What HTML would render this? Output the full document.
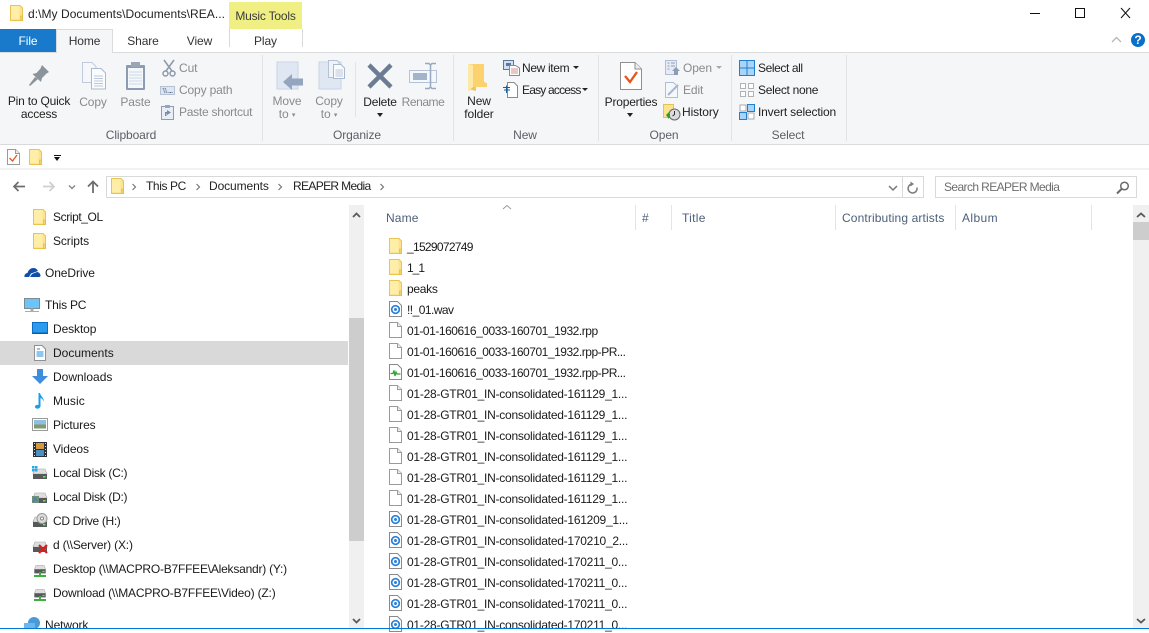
<!DOCTYPE html>
<html><head><meta charset="utf-8"><style>
html,body{margin:0;padding:0}
body{width:1149px;height:629px;overflow:hidden;background:#fff;position:relative;font:12px/16px "Liberation Sans",sans-serif;color:#1a1a1a}
.t{position:absolute;white-space:nowrap;letter-spacing:-.1px}
.c{text-align:center}
.d{color:#8a8a8a}
.g{color:#5a5f66}
.b{position:absolute}
.h{color:#4c607a;letter-spacing:.12px;top:210px}
.f{letter-spacing:-.25px}
.r{letter-spacing:-.47px}
svg{position:absolute;overflow:visible}
</style></head><body>
<svg width="0" height="0" style="position:absolute">
<defs>
<symbol id="fo" viewBox="0 0 13 16"><path d="M.5.5H10L12.500 3V15.500H.5Z" fill="#fde38f" stroke="#eac450"/><path d="M1 1H9.500V14H1Z" fill="#ffeea8"/><path d="M10.500 11H12.500V15.500H10.500Z" fill="#f3d46c" stroke="#e3bb48" stroke-width=".7"/></symbol>
<symbol id="doc" viewBox="0 0 13 16"><path d="M.5.5H8.500L12.500 4.500V15.500H.5Z" fill="#fff" stroke="#9a9a9a"/><path d="M8.500.5V4.500H12.500" fill="#eee" stroke="#9a9a9a"/></symbol>
<symbol id="wav" viewBox="0 0 13 16"><path d="M.5.5H8.500L12.500 4.500V15.500H.5Z" fill="#fff" stroke="#8a8a8a"/><circle cx="6.500" cy="8.500" r="3.800" fill="none" stroke="#2a80d8" stroke-width="1.700"/><circle cx="6.500" cy="8.500" r="1.500" fill="#2a80d8"/></symbol>
<symbol id="pk" viewBox="0 0 13 16"><path d="M.5.5H8.500L12.500 4.500V15.500H.5Z" fill="#fff" stroke="#8a8a8a"/><path d="M1.500 9.500H4L5 6.500L6 12L7 8L8 10H11.500" fill="none" stroke="#2fa52f" stroke-width="1.300"/></symbol>
<symbol id="dr" viewBox="0 0 16 16"><path d="M3 4H13L15 9H1Z" fill="#dedede" stroke="#a5a5a5" stroke-width=".6"/><rect x="1" y="9" width="14" height="5" fill="#56585a"/><rect x="11" y="11" width="2.500" height="1.500" fill="#6fe06f"/></symbol>
</defs></svg>

<!-- title bar -->
<svg style="left:10px;top:5px" width="13" height="16"><use href="#fo" width="13" height="16"/></svg>
<div class="t" style="left:28px;top:6px;color:#222;letter-spacing:.05px">d:\My Documents\Documents\REA...</div>
<div class="b" style="left:229px;top:2px;width:73px;height:27px;background:#f0ef83"></div>
<div class="t c" style="left:229px;top:8px;width:73px;color:#3b3b3b;letter-spacing:-.2px">Music Tools</div>
<div class="b" style="left:229px;top:29px;width:72px;height:18px;border-left:1px solid #d9d9d9;border-right:1px solid #d9d9d9"></div>
<svg style="left:1030px;top:5px" width="110" height="18" fill="none" stroke="#111"><path d="M0 8.500H10"/><path d="M45.500 3.500H54.500V12.500H45.500Z"/><path d="M91 3L100 13M100 3L91 13"/></svg>

<!-- tabs -->
<div class="b" style="left:0;top:29px;width:56px;height:23px;background:#1979ca"></div>
<div class="t c" style="left:0;top:33px;width:56px;color:#fff">File</div>
<div class="b" style="left:56px;top:29px;width:57px;height:24px;background:#f5f6f7;border:1px solid #dadbdc;border-bottom:0;box-sizing:border-box;z-index:2"></div>
<div class="t c" style="left:56px;top:33px;width:57px;z-index:3;color:#333">Home</div>
<div class="t c" style="left:114px;top:33px;width:58px;color:#333">Share</div>
<div class="t c" style="left:172px;top:33px;width:55px;color:#333">View</div>
<div class="t c" style="left:229px;top:33px;width:73px;color:#333">Play</div>
<svg style="left:1112px;top:34px" width="32" height="16" fill="none"><path d="M0 8L4.500 3.500L9 8" stroke="#b5b5b5" stroke-width="1.300"/><circle cx="26" cy="6" r="7" fill="#0a6fc9"/></svg>
<div class="t c" style="left:1131px;top:32px;width:14px;color:#fff;font-weight:bold">?</div>

<!-- ribbon -->
<div class="b" style="left:0;top:52px;width:1149px;height:93px;background:#f5f6f7;border-top:1px solid #dadbdc;border-bottom:1px solid #dadbdc;box-sizing:border-box"></div>
<div class="b" style="left:262px;top:55px;width:1px;height:86px;background:#e2e3e4"></div>
<div class="b" style="left:453px;top:55px;width:1px;height:86px;background:#e2e3e4"></div>
<div class="b" style="left:598px;top:55px;width:1px;height:86px;background:#e2e3e4"></div>
<div class="b" style="left:731px;top:55px;width:1px;height:86px;background:#e2e3e4"></div>
<div class="b" style="left:846px;top:55px;width:1px;height:86px;background:#e2e3e4"></div>
<div class="b" style="left:355px;top:62px;width:1px;height:55px;background:#e2e3e4"></div>

<!-- Clipboard -->
<svg style="left:28px;top:65px" width="22" height="22"><path d="M14 0L21 7L18.500 8.500L14 13L13 17L4.500 9L8.500 8L12.500 3.500Z" fill="#8b949b"/><path d="M7 12L1 20L2 21L10 14Z" fill="#8b949b"/></svg>
<div class="t c" style="left:0;top:95px;width:78px;color:#222;line-height:13px;letter-spacing:-.2px">Pin to Quick<br>access</div>
<svg style="left:82px;top:62px" width="25" height="28"><path d="M.5.5H10L14 4.500V20.500H.5Z" fill="#f4f7fb" stroke="#c0cbdb"/><path d="M9.500 6.500H19L23.500 11V27H9.500Z" fill="#fbfcfe" stroke="#aab9cf"/><path d="M12 14H21M12 16.500H21M12 19H21M12 21.500H21M12 24H21" stroke="#bcc8d9"/></svg>
<div class="t c d" style="left:78px;top:94px;width:30px">Copy</div>
<svg style="left:125px;top:61px" width="22" height="30"><rect x="1" y="4" width="19" height="25" rx="1" fill="#8d9cb2"/><rect x="3" y="7" width="15" height="20" fill="#f4f7fb"/><path d="M4 11H17M4 14H17M4 17H17M4 20H17M4 23H17" stroke="#cfd9e8"/><rect x="6" y="1" width="9" height="5" fill="#9aa5b5"/></svg>
<div class="t c d" style="left:118px;top:94px;width:35px">Paste</div>
<svg style="left:162px;top:60px" width="14" height="17" fill="none" stroke="#8c99ac" stroke-width="1.500"><path d="M2 0L10 11M12 0L4 11"/><circle cx="3.500" cy="13.500" r="2.500"/><circle cx="10.500" cy="13.500" r="2.500"/></svg>
<div class="t d" style="left:179px;top:60px">Cut</div>
<svg style="left:160px;top:86px" width="15" height="9"><rect x=".5" y=".5" width="14" height="8" fill="#dfe6f1" stroke="#b5c1d4"/><path d="M3 2L5 7M5 2L7 7M8.500 6.500H13" stroke="#56687f" stroke-dasharray="1 .5"/></svg>
<div class="t d" style="left:179px;top:82px;letter-spacing:-.15px">Copy path</div>
<svg style="left:161px;top:105px" width="13" height="15"><rect x=".5" y="1.500" width="12" height="13" fill="#e8eef6" stroke="#8d9cb2"/><path d="M4 11V7H6V5L10 7.500L6 10V8.500H5.500V11Z" fill="#7a8ba5"/><rect x="4" y="0" width="5" height="3" fill="#9aa5b5"/></svg>
<div class="t d" style="left:179px;top:104px;letter-spacing:-.25px">Paste shortcut</div>
<div class="t c g" style="left:100px;top:127px;width:62px">Clipboard</div>

<!-- Organize -->
<svg style="left:277px;top:62px" width="27" height="29"><rect x="0" y="0" width="21" height="27" fill="#dfe7f3" stroke="#c9d4e5"/><path d="M6 20L15 12V16.500H26V23.500H15V28Z" fill="#93a5bf"/></svg>
<div class="t c d" style="left:267px;top:95px;width:40px;line-height:13px">Move<br>to <span style="font-size:7px;vertical-align:1px">▾</span></div>
<svg style="left:319px;top:60px" width="27" height="30"><rect x="0" y="2" width="22" height="27" fill="#dfe7f3" stroke="#c9d4e5"/><path d="M9.500.5H18L20 2.500V17.500H9.500Z" fill="#f0f4fa" stroke="#b5c2d6"/><path d="M14.500 4.500H22L25.500 8V18.500H14.500Z" fill="#fafbfd" stroke="#aab9cf"/><path d="M16.500 10H24M16.500 12H24M16.500 14H24M16.500 16H24" stroke="#bcc8d9"/></svg>
<div class="t c d" style="left:309px;top:95px;width:40px;line-height:13px">Copy<br>to <span style="font-size:7px;vertical-align:1px">▾</span></div>
<svg style="left:367px;top:63px" width="26" height="26"><path d="M2 2L24 24M24 2L2 24" stroke="#6c7c92" stroke-width="4.500"/></svg>
<div class="t c" style="left:360px;top:94px;width:40px;color:#222;letter-spacing:-.2px">Delete</div>
<div class="b" style="left:377px;top:113px;border:3.500px solid transparent;border-top:4px solid #222"></div>
<svg style="left:409px;top:62px" width="30" height="28"><rect x=".5" y="8.500" width="27" height="12" fill="#f4f7fb" stroke="#b5c3d8"/><rect x="4" y="11" width="14" height="7" fill="#a3b3cb"/><path d="M16 1.500H20L21.500 3L23 1.500H27M21.500 3V25M16 26.500H20L21.500 25L23 26.500H27" stroke="#98a8c0" stroke-width="1.500" fill="none"/></svg>
<div class="t c d" style="left:401px;top:94px;width:44px;letter-spacing:-.45px">Rename</div>
<div class="t c g" style="left:330px;top:127px;width:54px">Organize</div>

<!-- New -->
<svg style="left:467px;top:63px" width="22" height="29"><path d="M1 1L9 2V28L1 26Z" fill="#f1c55e"/><path d="M2 1H17V19L20 20V24H6L2 28Z" fill="#fbd26e"/><path d="M1 1L6 2V24L1 28Z" fill="#fde9a7"/></svg>
<div class="t c" style="left:460px;top:95px;width:38px;color:#222;line-height:13px">New<br>folder</div>
<svg style="left:503px;top:60px" width="17" height="16"><rect x=".5" y=".5" width="10" height="9" fill="#cfe0f4" stroke="#5c7898"/><rect x="3" y="3" width="5" height="3" fill="#5c7898"/><path d="M6.500 5.500H12.500L16.500 8V15.500H6.500Z" fill="#fff" stroke="#8a8a8a"/><path d="M8 9H15M8 11H15M8 13H15" stroke="#d08f8f"/></svg>
<div class="t" style="left:522px;top:60px;color:#222;letter-spacing:-.35px">New item</div>
<div class="b" style="left:573px;top:66px;border:3px solid transparent;border-top:3.500px solid #222"></div>
<svg style="left:503px;top:82px" width="16" height="16"><path d="M4.500.5H11L14.500 4V15.500H4.500Z" fill="#fff" stroke="#8a8a8a"/><path d="M0 5.500H7M1 8H7" stroke="#1a5f96"/><path d="M3.500 3.500V11" stroke="#1a5f96"/></svg>
<div class="t" style="left:522px;top:82px;color:#222;letter-spacing:-.8px">Easy access</div>
<div class="b" style="left:582px;top:88px;border:3px solid transparent;border-top:3.500px solid #222"></div>
<div class="t c g" style="left:500px;top:127px;width:50px">New</div>

<!-- Open -->
<svg style="left:620px;top:62px" width="22" height="28"><path d="M.5.5H15L21.500 7V27.500H.5Z" fill="#fff" stroke="#8f8f8f"/><path d="M15 .5V7H21.500" fill="#eee" stroke="#8f8f8f"/><path d="M5 14L10 20L17 10" fill="none" stroke="#e8541c" stroke-width="2.300"/></svg>
<div class="t c" style="left:604px;top:94px;width:54px;color:#222;letter-spacing:-.2px">Properties</div>
<div class="b" style="left:627px;top:113px;border:3.500px solid transparent;border-top:4px solid #222"></div>
<svg style="left:665px;top:60px" width="15" height="16"><rect x=".5" y=".5" width="11" height="14" fill="#e6ecf5" stroke="#b0bed2"/><path d="M2.500 3H4.500M6 3H10M2.500 6H4.500M6 6H10M2.500 9H4.500" stroke="#8c9db5"/><path d="M11 7L15 11H13V15H9V11H7Z" fill="#8c9db5"/></svg>
<div class="t d" style="left:683px;top:60px">Open</div>
<div class="b" style="left:716px;top:66px;border:3px solid transparent;border-top:3.500px solid #aaa"></div>
<svg style="left:665px;top:82px" width="15" height="16"><path d="M.5.500H8.500L12.500 4.500V15.500H.5Z" fill="#f4f7fb" stroke="#b0bed2"/><path d="M3 13L13 3" stroke="#a8b8ce" stroke-width="2"/></svg>
<div class="t d" style="left:683px;top:82px">Edit</div>
<svg style="left:663px;top:104px" width="18" height="17"><rect x=".5" y=".5" width="10" height="13" fill="#fde38f" stroke="#e4c255"/><circle cx="11.500" cy="10.500" r="5.500" fill="#dcdcdc" stroke="#666"/><path d="M11.500 7V10.500L9.500 12" stroke="#333" fill="none"/><path d="M3 11L6 8V10H7V14H6V15Z" fill="#2d9c2d"/></svg>
<div class="t" style="left:682px;top:104px;color:#222">History</div>
<div class="t c g" style="left:640px;top:127px;width:48px">Open</div>

<!-- Select -->
<svg style="left:739px;top:60px" width="16" height="16"><path d="M.5.5H15.500V15.500H.5ZM8 .5V15.500M.5 8H15.500" fill="#a9d4f7" stroke="#1f7fd1"/></svg>
<div class="t" style="left:758px;top:60px;color:#222;letter-spacing:-.4px">Select all</div>
<svg style="left:740px;top:83px" width="14" height="14" fill="#fff" stroke="#b2b2b2"><rect x=".5" y=".5" width="5" height="5"/><rect x="8.500" y=".5" width="5" height="5"/><rect x=".5" y="8.500" width="5" height="5"/><rect x="8.500" y="8.500" width="5" height="5"/></svg>
<div class="t" style="left:758px;top:82px;color:#222;letter-spacing:-.3px">Select none</div>
<svg style="left:739px;top:104px" width="16" height="16"><rect x="1" y="1" width="6" height="6" fill="#fff" stroke="#aaa"/><rect x="8.500" y=".5" width="7" height="7" fill="#a9d4f7" stroke="#1f7fd1"/><rect x=".5" y="8.500" width="7" height="7" fill="#a9d4f7" stroke="#1f7fd1"/><rect x="9" y="9" width="6" height="6" fill="#fff" stroke="#aaa"/></svg>
<div class="t" style="left:758px;top:104px;color:#222;letter-spacing:-.17px">Invert selection</div>
<div class="t c g" style="left:760px;top:127px;width:56px">Select</div>

<!-- QAT -->
<svg style="left:7px;top:149px" width="13" height="16"><use href="#doc" width="13" height="16"/><path d="M2.500 9L5.500 12L10 6" fill="none" stroke="#e8541c" stroke-width="1.300"/></svg>
<svg style="left:29px;top:149px" width="13" height="16"><use href="#fo" width="13" height="16"/></svg>
<div class="b" style="left:54px;top:155px;width:7px;height:1px;background:#111"></div>
<div class="b" style="left:54px;top:157px;border:3.500px solid transparent;border-top:4px solid #111"></div>
<div class="b" style="left:0;top:168px;width:1149px;height:2px;background:#f2f2f2"></div>

<!-- nav bar -->
<svg style="left:12px;top:179px" width="90" height="16" fill="none"><path d="M13 7.500H2M6.500 3L2 7.500L6.500 12" stroke="#6d6d6d" stroke-width="1.700"/><path d="M31 7.500H42M37.500 3L42 7.500L37.500 12" stroke="#cfcfcf" stroke-width="1.700"/><path d="M57 6.500L60 9.500L63 6.500" stroke="#8a8a8a" stroke-width="1.500"/><path d="M81 14V3M76 7.500L81 2.500L86 7.500" stroke="#6d6d6d" stroke-width="1.800"/></svg>
<div class="b" style="left:106px;top:176px;width:818px;height:22px;border:1px solid #d9d9d9;box-sizing:border-box"></div>
<div class="b" style="left:902px;top:177px;width:1px;height:20px;background:#d9d9d9"></div>
<svg style="left:111px;top:178px" width="13" height="16"><use href="#fo" width="13" height="16"/></svg>
<svg style="left:132px;top:182px" width="260" height="10" fill="none" stroke="#777" stroke-width="1.200"><path d="M.5 2L3.500 5L.5 8M64.500 2L67.500 5L64.500 8M146.500 2L149.500 5L146.500 8M248.500 2L251.500 5L248.500 8"/></svg>
<div class="t" style="left:146px;top:178px;color:#222;letter-spacing:-.4px">This PC</div>
<div class="t" style="left:209px;top:178px;color:#222">Documents</div>
<div class="t" style="left:293px;top:178px;color:#222;letter-spacing:-.65px">REAPER Media</div>
<svg style="left:888px;top:181px" width="32" height="14" fill="none"><path d="M1 5L5 9L9 5" stroke="#777" stroke-width="1.500"/><path d="M29 6.500A4.500 4.500 0 1 1 24 3" stroke="#7d7d7d" stroke-width="1.500"/><path d="M22.500 .5L26 3L22.500 5.500Z" fill="#7d7d7d"/></svg>
<div class="b" style="left:935px;top:176px;width:202px;height:22px;border:1px solid #d9d9d9;box-sizing:border-box"></div>
<div class="t" style="left:944px;top:179px;color:#6d6d6d;letter-spacing:-.6px">Search REAPER Media</div>
<svg style="left:1116px;top:181px" width="14" height="14" fill="none" stroke="#6a6a6a"><circle cx="8.500" cy="5" r="3.800" stroke-width="1.500"/><path d="M5.500 8L1 12.500" stroke-width="2"/></svg>

<!-- nav pane -->
<div class="b" style="left:0;top:341px;width:348px;height:24px;background:#d9d9d9"></div>
<div class="b" style="left:349px;top:205px;width:15px;height:424px;background:#f0f0f0"></div>
<div class="b" style="left:349px;top:318px;width:15px;height:223px;background:#cdcdcd"></div>
<svg style="left:352px;top:211px" width="10" height="8" fill="none"><path d="M1 6L4.500 2.500L8 6" stroke="#5a5a5a" stroke-width="1.800"/></svg>
<svg style="left:352px;top:617px" width="10" height="8" fill="none"><path d="M1 2L4.500 5.500L8 2" stroke="#5a5a5a" stroke-width="1.800"/></svg>

<svg style="left:33px;top:209px" width="13" height="16"><use href="#fo" width="13" height="16"/></svg><div class="t" style="left:53px;top:209px;letter-spacing:-.4px">Script_OL</div>
<svg style="left:33px;top:233px" width="13" height="16"><use href="#fo" width="13" height="16"/></svg><div class="t" style="left:53px;top:233px">Scripts</div>
<svg style="left:24px;top:267px" width="17" height="11"><path d="M.5 10C0 7.500 2 6 3.500 6C4.500 2.500 7 1 9.500 1C12 1 13 2.500 14 4L7 6.500L5 10Z" fill="#0f4fa8"/><path d="M6 10L8 7L13 5C15 5 16.500 7 16.500 8.500C16.500 9.500 16 10 15 10Z" fill="#0f4fa8"/></svg>
<div class="t" style="left:45px;top:265px">OneDrive</div>
<svg style="left:24px;top:298px" width="16" height="15"><rect x=".5" y=".5" width="15" height="10" fill="#6cc4f8" stroke="#7d8a96"/><path d="M7 11H9V13H7ZM1 13.500H15" stroke="#a4adb5" fill="#a4adb5"/></svg>
<div class="t" style="left:45px;top:297px;letter-spacing:-.2px">This PC</div>
<svg style="left:32px;top:322px" width="16" height="13"><rect x=".5" y=".5" width="15" height="11" fill="#2b9bf0" stroke="#0b6ec4"/><rect x="1" y="10.500" width="14" height="1.500" fill="#0b5ea8"/></svg>
<div class="t" style="left:53px;top:321px">Desktop</div>
<svg style="left:34px;top:345px" width="12" height="16"><path d="M.5.500H8L11.500 4V15.500H.5Z" fill="#fff" stroke="#909090"/><path d="M3 4H6M2.500 7H9.500M2.500 9H9.500M2.500 11H9.500" stroke="#1f8fe0"/></svg>
<div class="t" style="left:53px;top:345px;letter-spacing:0">Documents</div>
<svg style="left:32px;top:369px" width="16" height="16"><path d="M5 0H11V7H16L8 15L0 7H5Z" fill="#3f8ede"/></svg>
<div class="t" style="left:53px;top:369px;letter-spacing:0">Downloads</div>
<svg style="left:34px;top:393px" width="12" height="16"><path d="M4.500 0H6C6.500 3 10 4.500 10 9C9.500 7 8 5.500 6.500 5V13C6.500 15 4.500 16 2.500 15.500C.5 15 .5 12.500 2.500 12C3 11.800 4 11.800 4.500 12Z" fill="#1b9ee8"/></svg>
<div class="t" style="left:53px;top:393px;letter-spacing:.1px">Music</div>
<svg style="left:32px;top:418px" width="16" height="13"><rect x=".5" y=".5" width="15" height="12" fill="#fff" stroke="#9a9a9a"/><rect x="2" y="2" width="12" height="4.500" fill="#8fc0e0"/><rect x="2" y="6.500" width="12" height="4" fill="#7f9a6c"/></svg>
<div class="t" style="left:53px;top:417px">Pictures</div>
<svg style="left:33px;top:442px" width="14" height="15"><rect width="14" height="15" fill="#2c3138"/><rect x="3" y="1" width="8" height="6" fill="#d69a3e"/><rect x="3" y="8" width="8" height="6" fill="#4a90c8"/><path d="M1 1.500H2M1 4.500H2M1 7.500H2M1 10.500H2M1 13.500H2M12 1.500H13M12 4.500H13M12 7.500H13M12 10.500H13M12 13.500H13" stroke="#ddd"/></svg>
<div class="t" style="left:53px;top:441px">Videos</div>
<svg style="left:32px;top:466px" width="16" height="14"><use href="#dr" width="16" height="16" y="-1"/><rect x="0" y="0" width="2.500" height="2.500" fill="#22a9ee"/><rect x="3" y="0" width="2.500" height="2.500" fill="#22a9ee"/><rect x="0" y="3" width="2.500" height="2.500" fill="#22a9ee"/><rect x="3" y="3" width="2.500" height="2.500" fill="#22a9ee"/></svg>
<div class="t" style="left:53px;top:465px;letter-spacing:-.3px">Local Disk (C:)</div>
<svg style="left:32px;top:491px" width="16" height="14"><use href="#dr" width="16" height="16" y="-2"/><rect x="0" y="5" width="7" height="7" fill="#6f8e7c"/><path d="M1 11L3 7L5 10" stroke="#3a80c0" fill="none"/></svg>
<div class="t" style="left:53px;top:489px;letter-spacing:-.3px">Local Disk (D:)</div>
<svg style="left:32px;top:513px" width="16" height="16"><use href="#dr" width="16" height="16"/><circle cx="10" cy="5.500" r="5" fill="#dcdcdc" stroke="#999"/><circle cx="10" cy="5.500" r="1.500" fill="#fff" stroke="#888"/></svg>
<div class="t" style="left:53px;top:513px;letter-spacing:-.35px">CD Drive (H:)</div>
<svg style="left:32px;top:538px" width="17" height="16"><use href="#dr" width="16" height="16"/><path d="M7 7L15 15M15 7L7 15" stroke="#d81e1e" stroke-width="2.200"/></svg>
<div class="t" style="left:53px;top:537px;letter-spacing:-.17px">d (\\Server) (X:)</div>
<svg style="left:32px;top:562px" width="16" height="16"><use href="#dr" width="16" height="13"/><path d="M8 10V13M2 14H14" stroke="#3fae3f" stroke-width="2"/></svg>
<div class="t" style="left:53px;top:561px;letter-spacing:-.22px">Desktop (\\MACPRO-B7FFEE\Aleksandr) (Y:)</div>
<svg style="left:32px;top:586px" width="16" height="16"><use href="#dr" width="16" height="13"/><path d="M8 10V13M2 14H14" stroke="#3fae3f" stroke-width="2"/></svg>
<div class="t" style="left:53px;top:585px;letter-spacing:-.18px">Download (\\MACPRO-B7FFEE\Video) (Z:)</div>
<svg style="left:24px;top:617px" width="17" height="12"><circle cx="10" cy="6" r="6" fill="#4a9ad8"/><rect x="0" y="6" width="11" height="6" fill="#6cb8ee"/></svg>
<div class="t" style="left:45px;top:617px">Network</div>

<!-- list header -->
<div class="t h" style="left:386px">Name</div>
<svg style="left:502px;top:204px" width="10" height="6" fill="none"><path d="M1 5L5 1.500L9 5" stroke="#9a9a9a"/></svg>
<div class="t h" style="left:642px">#</div>
<div class="t h" style="left:682px;letter-spacing:.3px">Title</div>
<div class="t h" style="left:842px">Contributing artists</div>
<div class="t h" style="left:962px;letter-spacing:.4px">Album</div>
<div class="b" style="left:635px;top:205px;width:1px;height:25px;background:#e5e5e5"></div>
<div class="b" style="left:671px;top:205px;width:1px;height:25px;background:#e5e5e5"></div>
<div class="b" style="left:835px;top:205px;width:1px;height:25px;background:#e5e5e5"></div>
<div class="b" style="left:955px;top:205px;width:1px;height:25px;background:#e5e5e5"></div>
<div class="b" style="left:1091px;top:205px;width:1px;height:25px;background:#e5e5e5"></div>

<!-- list scrollbar -->
<div class="b" style="left:1133px;top:205px;width:16px;height:424px;background:#f0f0f0"></div>
<div class="b" style="left:1133px;top:222px;width:16px;height:18px;background:#cdcdcd"></div>
<svg style="left:1136px;top:211px" width="10" height="8" fill="none"><path d="M1 6L5 2.500L9 6" stroke="#5a5a5a" stroke-width="1.800"/></svg>
<svg style="left:1136px;top:617px" width="10" height="8" fill="none"><path d="M1 2L5 5.500L9 2" stroke="#5a5a5a" stroke-width="1.800"/></svg>

<!-- files -->
<svg style="left:389px;top:238px" width="13" height="16"><use href="#fo" width="13" height="16"/></svg><div class="t" style="left:407px;top:239px;letter-spacing:-.7px">_1529072749</div>
<svg style="left:389px;top:259px" width="13" height="16"><use href="#fo" width="13" height="16"/></svg><div class="t" style="left:407px;top:260px;letter-spacing:-1px">1_1</div>
<svg style="left:389px;top:280px" width="13" height="16"><use href="#fo" width="13" height="16"/></svg><div class="t" style="left:407px;top:281px;letter-spacing:-.3px">peaks</div>
<svg style="left:389px;top:301px" width="13" height="16"><use href="#wav" width="13" height="16"/></svg><div class="t" style="left:407px;top:302px;letter-spacing:-.55px">!!_01.wav</div>
<svg style="left:389px;top:322px" width="13" height="16"><use href="#doc" width="13" height="16"/></svg><div class="t r" style="left:407px;top:323px">01-01-160616_0033-160701_1932.rpp</div>
<svg style="left:389px;top:343px" width="13" height="16"><use href="#doc" width="13" height="16"/></svg><div class="t r" style="left:407px;top:344px">01-01-160616_0033-160701_1932.rpp-PR...</div>
<svg style="left:389px;top:364px" width="13" height="16"><use href="#pk" width="13" height="16"/></svg><div class="t r" style="left:407px;top:365px">01-01-160616_0033-160701_1932.rpp-PR...</div>
<svg style="left:389px;top:385px" width="13" height="16"><use href="#doc" width="13" height="16"/></svg><div class="t f" style="left:407px;top:386px">01-28-GTR01_IN-consolidated-161129_1...</div>
<svg style="left:389px;top:406px" width="13" height="16"><use href="#doc" width="13" height="16"/></svg><div class="t f" style="left:407px;top:407px">01-28-GTR01_IN-consolidated-161129_1...</div>
<svg style="left:389px;top:427px" width="13" height="16"><use href="#doc" width="13" height="16"/></svg><div class="t f" style="left:407px;top:428px">01-28-GTR01_IN-consolidated-161129_1...</div>
<svg style="left:389px;top:448px" width="13" height="16"><use href="#doc" width="13" height="16"/></svg><div class="t f" style="left:407px;top:449px">01-28-GTR01_IN-consolidated-161129_1...</div>
<svg style="left:389px;top:469px" width="13" height="16"><use href="#doc" width="13" height="16"/></svg><div class="t f" style="left:407px;top:470px">01-28-GTR01_IN-consolidated-161129_1...</div>
<svg style="left:389px;top:490px" width="13" height="16"><use href="#doc" width="13" height="16"/></svg><div class="t f" style="left:407px;top:491px">01-28-GTR01_IN-consolidated-161129_1...</div>
<svg style="left:389px;top:511px" width="13" height="16"><use href="#wav" width="13" height="16"/></svg><div class="t f" style="left:407px;top:512px">01-28-GTR01_IN-consolidated-161209_1...</div>
<svg style="left:389px;top:532px" width="13" height="16"><use href="#wav" width="13" height="16"/></svg><div class="t f" style="left:407px;top:533px">01-28-GTR01_IN-consolidated-170210_2...</div>
<svg style="left:389px;top:553px" width="13" height="16"><use href="#wav" width="13" height="16"/></svg><div class="t f" style="left:407px;top:554px">01-28-GTR01_IN-consolidated-170211_0...</div>
<svg style="left:389px;top:574px" width="13" height="16"><use href="#wav" width="13" height="16"/></svg><div class="t f" style="left:407px;top:575px">01-28-GTR01_IN-consolidated-170211_0...</div>
<svg style="left:389px;top:595px" width="13" height="16"><use href="#wav" width="13" height="16"/></svg><div class="t f" style="left:407px;top:596px">01-28-GTR01_IN-consolidated-170211_0...</div>
<svg style="left:389px;top:616px" width="13" height="16"><use href="#wav" width="13" height="16"/></svg><div class="t f" style="left:407px;top:617px">01-28-GTR01_IN-consolidated-170211_0...</div>

<div class="b" style="left:0;top:628px;width:1149px;height:1px;background:#0078d7;z-index:9"></div>
</body></html>
